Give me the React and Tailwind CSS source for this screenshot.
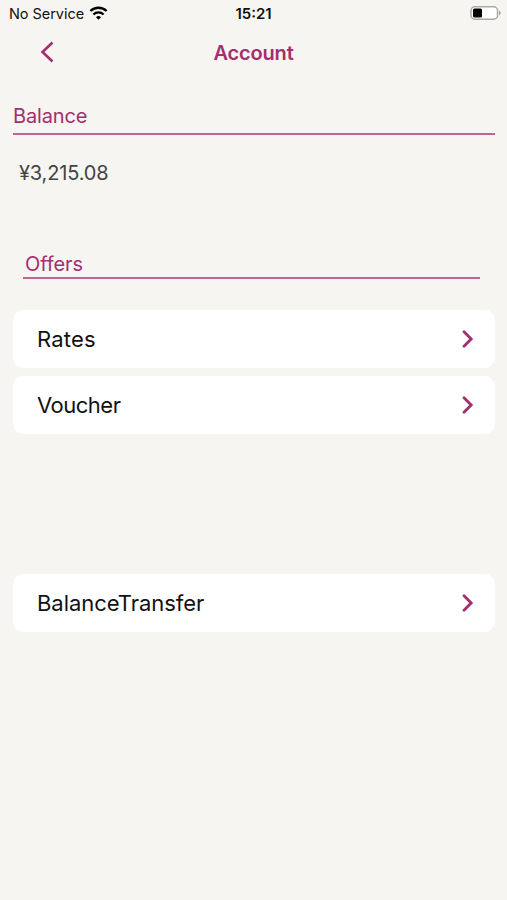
const offers = [
  { label: 'Rates', spacing: 'tracking-[0.2px]' },
  { label: 'Voucher', spacing: 'tracking-[-0.5px]' },
];

function ChevronRight() {
  return (
    <svg width="12" height="18" viewBox="0 0 12 18" fill="none" stroke="#a32f6d" strokeWidth="2.8" strokeLinecap="round">
      <path d="M2 1.8 9.2 9 2 16.2" />
    </svg>
  );
}

function MenuRow({ label, spacing }) {
  return (
    <button className="flex h-[58px] w-full items-center justify-between rounded-[10px] bg-white pr-[21px] pl-6 text-left">
      <span className={`text-[22px] leading-7 text-[#111111] ${spacing}`}>{label}</span>
      <ChevronRight />
    </button>
  );
}

function StatusBar() {
  return (
    <div className="grid h-7 grid-cols-3 items-center pr-1.5 pl-[9px] text-[14.5px] text-[#111111]">
      <div className="flex items-center gap-[5px]">
        <span className="whitespace-nowrap tracking-[-0.05px]">No Service</span>
        <svg className="mb-[2px]" width="19" height="14" viewBox="0 0 19 14" fill="none" stroke="#000000">
          <path d="M1.4 5a11.7 11.7 0 0 1 16.2 0" strokeWidth="2.4" />
          <path d="M4.4 8.5a7.4 7.4 0 0 1 10.2 0" strokeWidth="2.2" />
          <path d="M7 11.2a3.7 3.7 0 0 1 5 0l-2 2a.7.7 0 0 1-1 0z" fill="#000000" stroke="none" />
        </svg>
      </div>
      <span className="-ml-[3px] text-center text-[15px] font-semibold">15:21</span>
      <svg className="mb-0.5 justify-self-end" width="31" height="14" viewBox="0 0 31 14">
        <rect x="1" y=".8" width="26.5" height="12.4" rx="3.8" fill="#ffffff" stroke="#aaa9a5" strokeWidth="1.5" />
        <rect x="3" y="2.5" width="9" height="9" rx="1.5" fill="#000000" />
        <path d="M29 4.8v4.4c1-.4 1.600-1.200 1.600-2.200S30 5.200 29 4.800z" fill="#9a9a98" />
      </svg>
    </div>
  );
}

export default function App() {
  return (
    <div className="h-[900px] w-[507px] overflow-hidden bg-[#f7f5f2] font-['Inter','Liberation_Sans',sans-serif]">
      <StatusBar />
      <header className="grid h-12 grid-cols-3 items-center text-[#a32f6d]">
        <svg className="ml-10" width="14" height="22" viewBox="0 0 14 22" fill="none" stroke="currentColor" strokeWidth="2.6">
          <path d="M12.500 1.500 2.500 11l10 9.500" />
        </svg>
        <h1 className="pt-px text-center text-[20px] font-semibold tracking-[-0.15px]">Account</h1>
      </header>
      <main className="pr-3 pl-[13px]">
        <section className="pt-6">
          <h2 className="h-[35px] border-b-2 border-[#bd6694] pt-0.5 text-[20px] leading-7 tracking-[-0.15px] text-[#a32f6d]">Balance</h2>
          <p className="mt-6 pl-1.5 text-[20px] leading-7 tracking-[-0.15px] text-[#444444]">¥3,215.08</p>
        </section>
        <section className="mt-[62px]">
          <h2 className="mr-[15px] ml-2.5 h-[30px] border-b-2 border-[#bd6694] pt-px pl-0.5 text-[20px] leading-7 tracking-[-0.1px] text-[#a32f6d]">Offers</h2>
          <div className="mt-[31px] flex flex-col gap-2">
            {offers.map((offer) => (
              <MenuRow key={offer.label} {...offer} />
            ))}
          </div>
        </section>
        <section className="mt-[140px]">
          <MenuRow label="BalanceTransfer" spacing="tracking-[-0.04px]" />
        </section>
      </main>
    </div>
  );
}
